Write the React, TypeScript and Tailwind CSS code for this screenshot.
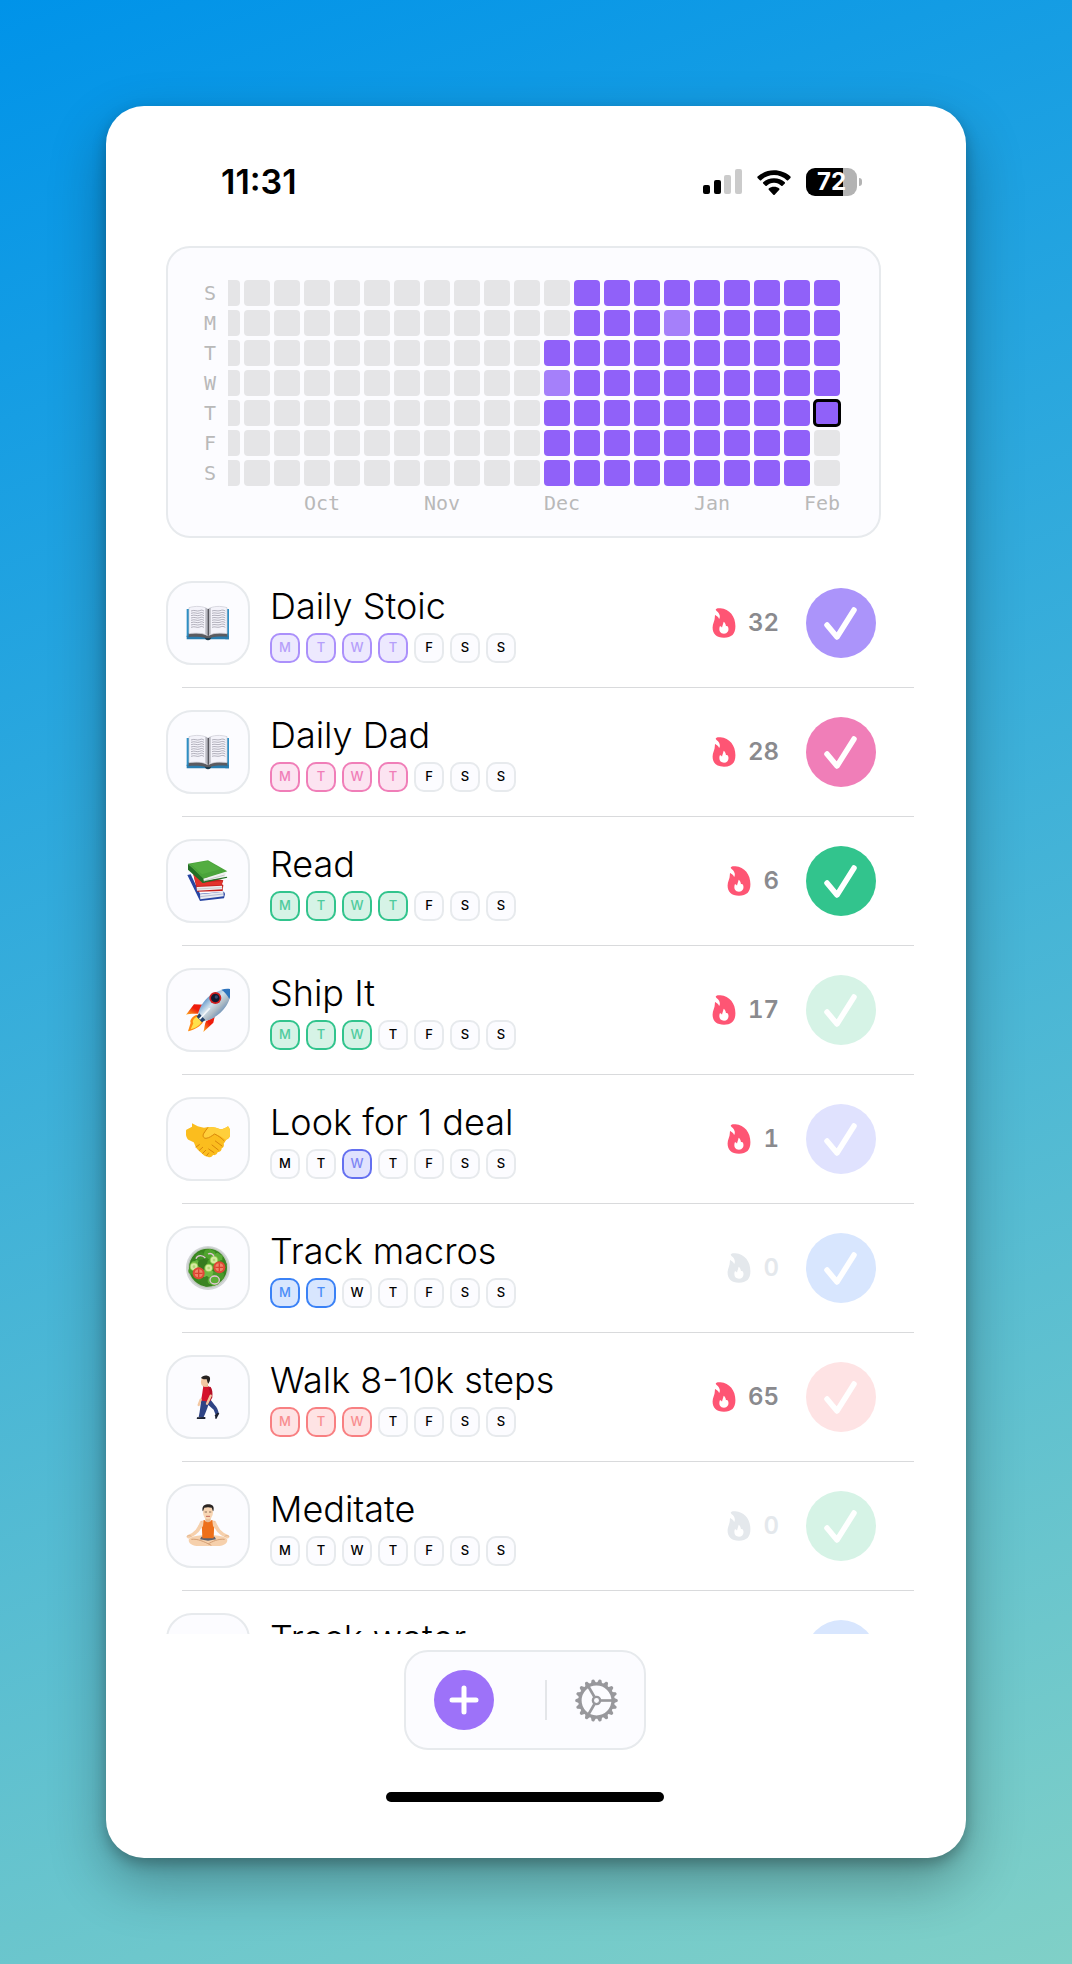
import { useState, type ReactNode } from "react";

type Tone = { chip: string; solid: string; soft: string };

const violet: Tone = {
  chip: "border-[#ab90fb] bg-[#ede9fe] text-[#b59ffa]",
  solid: "bg-[#ab94fa]",
  soft: "bg-[#ede9fe]",
};
const pink: Tone = {
  chip: "border-[#f07eb8] bg-[#fce4f1] text-[#f07eb8]",
  solid: "bg-[#f07eb8]",
  soft: "bg-[#fce4f1]",
};
const green: Tone = {
  chip: "border-[#32c48d] bg-[#d6f3e6] text-[#4fcb9d]",
  solid: "bg-[#32c48d]",
  soft: "bg-[#d6f3e6]",
};
const indigo: Tone = {
  chip: "border-[#6470f0] bg-[#e0e2fe] text-[#7e86f4]",
  solid: "bg-[#6470f0]",
  soft: "bg-[#e0e2fe]",
};
const blue: Tone = {
  chip: "border-[#3b82f6] bg-[#d8e6fe] text-[#4b8df7]",
  solid: "bg-[#3b82f6]",
  soft: "bg-[#d8e6fe]",
};
const red: Tone = {
  chip: "border-[#f88082] bg-[#fee3e4] text-[#f88d8f]",
  solid: "bg-[#f88082]",
  soft: "bg-[#fee3e4]",
};

function Art({ children }: { children?: ReactNode }) {
  return (
    <svg viewBox="0 0 132 132" className="size-11" aria-hidden="true">
      {children}
    </svg>
  );
}

function OpenBook() {
  const lines = [30, 37, 44, 51, 58, 65, 72, 79];
  return (
    <Art>
      <path d="M2 24h12v84H2zM118 24h11v91h-11z" fill="#2f8fc4" />
      <path d="M2 104h127v11H2z" fill="#2a7db0" />
      <path d="M56 106h20c0 8-4 12-10 12s-10-4-10-12z" fill="#1e3a4c" />
      <path d="M8 96h116v11c-20-1-40 0-52 4H60c-14-4-34-4-52-3z" fill="#5b5b60" />
      <path d="M9 20C28 14 52 15 65 24v80C52 96 30 95 9 98z" fill="#f4f3fa" stroke="#c9c8d2" strokeWidth="2" />
      <path d="M123 20C104 14 80 15 67 24v80c13-8 35-9 56-6z" fill="#f4f3fa" stroke="#c9c8d2" strokeWidth="2" />
      <path d="M58 20c5 1 7 3 8 5 1-2 3-4 8-5v78l-8 6-8-6z" fill="#b9b9c1" />
      <path d="M65 24h4v80h-4z" fill="#55555c" />
      {lines.map((y) => (
        <path
          key={y}
          d={`M15 ${y}c12-5 18 3 26-1s8 0 13 1M78 ${y}c8-4 16 2 24-1s10-2 16 1`}
          fill="none"
          stroke="#8f8e9b"
          strokeWidth="2"
        />
      ))}
    </Art>
  );
}

function Books() {
  return (
    <Art>
      <path d="M4 48l10-2 28 58 72-6 3 7-3 13-72 8z" fill="#2745a3" />
      <path d="M42 106l70-8 1 14-70 9z" fill="#e8eaf0" />
      <path d="M42 113l70-8" stroke="#9ba6c8" strokeWidth="2" />
      <path d="M22 46l90 18-4 12 4 2-2 18-76 2z" fill="#c4201d" />
      <path d="M32 84l76-4 1 11-76 4z" fill="#eeeef0" />
      <path d="M32 90l76-4" stroke="#aaa" strokeWidth="1.5" />
      <path d="M22 46l40 24 48-4-4 12-74 3z" fill="#e2332b" />
      <path d="M6 14v18l44 40 8-2-4-14z" fill="#226f24" />
      <path d="M52 58l70-19-6 15-62 15z" fill="#f1f1f1" />
      <path d="M54 65l62-17" stroke="#b5b5b5" strokeWidth="2" />
      <path d="M50 72l74-16-2-3-66 13z" fill="#226f24" />
      <path d="M6 14L66 4l58 33-72 22z" fill="#4aa43a" />
      <path d="M14 15l52-9 40 24-58 16z" fill="#5bb548" opacity=".5" />
    </Art>
  );
}

function Rocket() {
  return (
    <Art>
      <defs>
        <linearGradient id="hull" x1="0" y1="0" x2="1" y2="1">
          <stop offset=".2" stopColor="#3f7fc0" />
          <stop offset=".45" stopColor="#cfe0ec" />
          <stop offset=".6" stopColor="#aebbc4" />
          <stop offset=".85" stopColor="#3c74b2" />
        </linearGradient>
        <linearGradient id="fin" x1="1" y1="0" x2="0" y2="1">
          <stop offset=".45" stopColor="#ee1c0c" />
          <stop offset="1" stopColor="#ffb020" />
        </linearGradient>
      </defs>
      <path d="M54 50l-30-1L0 80c10-4 26-3 36-3z" fill="url(#fin)" />
      <path d="M86 86l-4 18-30 28c4-10 3-22 8-32z" fill="url(#fin)" />
      <path d="M34 80c-16 4-24 18-20 24L6 130c16-4 40-14 46-30z" fill="#ff8a12" />
      <path d="M34 86c-12 4-16 14-12 20l-8 18c14-3 28-12 32-22z" fill="#ffe14a" />
      <path d="M36 80c4-24 22-50 46-64C98 8 118 1 132 3c4 16-1 36-12 52-14 22-42 42-66 44z" fill="url(#hull)" />
      <path d="M106 5c10-3 20-3 26-2 3 10 2 20-2 30-6-12-14-22-24-28z" fill="#2f74bd" />
      <path d="M40 76l18 20-10 7-16-17z" fill="#23426b" />
      <circle cx="88" cy="30" r="18" fill="#d11d1d" />
      <circle cx="88" cy="30" r="13" fill="#111a30" />
      <circle cx="91" cy="27" r="5" fill="#34496f" />
      <path d="M70 62L42 92" stroke="#f3f7fa" strokeWidth="5" strokeLinecap="round" />
    </Art>
  );
}

function Handshake() {
  return (
    <Art>
      <path
        d="M18 29L1 38c-4 10 0 26 6 30l16 8c4 6 4 12 8 17 6 7 12 13 18 17 4 6 12 8 16 9 8 4 14 0 16-5 8 2 12-3 14-8 8-1 12-6 12-12 6-3 8-9 6-14l8-12c8-3 10-8 12-14 2-10-1-20-7-26-8 5-14 8-22 9-10-5-22-8-32-7-8 0-12 2-18 2-14-1-24-6-36-13z"
        fill="#fbbd1e"
      />
      <path d="M64 31c8-2 26-1 40 7 8-1 16-6 22-10 5 6 8 16 7 24-3 10-8 14-14 16-8-6-18-14-34-18-8 6-16 14-24 15-8-1-11-8-8-13z" fill="#ffcf3b" />
      <path d="M54 48c-6 8-2 16 6 16 10-1 18-8 26-13 12 6 20 12 28 20M88 72l20 15M78 84l19 15M68 96l16 11" fill="none" stroke="#d8860b" strokeWidth="3" strokeLinecap="round" />
      <path d="M30 90l10-7M40 100l10-9M50 109l9-9M62 116l6-8" stroke="#d8860b" strokeWidth="3" strokeLinecap="round" />
      <path d="M66 31c-4 6-8 10-12 17" stroke="#d8860b" strokeWidth="3" fill="none" />
    </Art>
  );
}

function Salad() {
  const leaves = [
    [44, 34, "#3f8f24"], [70, 24, "#4fa32d"], [92, 36, "#5cae37"], [104, 58, "#3b8423"],
    [30, 58, "#62b33c"], [52, 54, "#357a1e"], [80, 52, "#4a9a2a"], [40, 88, "#3f8f24"],
    [66, 84, "#6dba44"], [96, 88, "#4a9a2a"], [60, 106, "#3b8423"], [82, 104, "#5cae37"], [24, 74, "#4a9a2a"],
  ] as const;
  return (
    <Art>
      <circle cx="66" cy="66" r="66" fill="#d3d6d8" />
      <circle cx="66" cy="65" r="61" fill="#bfc9bd" />
      <circle cx="66" cy="65" r="57" fill="#38851f" />
      {leaves.map(([x, y, fill]) => (
        <path
          key={`${x}-${y}`}
          d={`M${x - 17} ${y}q3-15 14-13q6-7 12 2q12 3 8 12q2 12-9 12q-9 7-15-2q-10-1-10-11z`}
          fill={fill}
        />
      ))}
      {[[24, 62], [68, 66], [84, 42]].map(([x, y]) => (
        <g key={x}>
          <circle cx={x} cy={y} r="13" fill="#8cc84c" />
          <circle cx={x} cy={y} r="10" fill="#d5eba0" />
          <circle cx={x} cy={y} r="4" fill="#b2d777" />
        </g>
      ))}
      {[[38, 82], [100, 64]].map(([x, y]) => (
        <g key={x}>
          <circle cx={x} cy={y} r="18" fill="#df4736" />
          <circle cx={x} cy={y} r="12" fill="#f08468" />
          <path d={`M${x - 12} ${y}h24M${x} ${y - 12}v24`} stroke="#d9402f" strokeWidth="4" />
        </g>
      ))}
      <ellipse cx="86" cy="102" rx="14" ry="12" fill="none" stroke="#e5c3d6" strokeWidth="4" />
      <path d="M30 38c4-12 20-12 28-2M66 24c8-4 16 0 18 8" fill="none" stroke="#e5c3d6" strokeWidth="4" />
    </Art>
  );
}

function Walker() {
  return (
    <Art>
      <path d="M46 72c-2 16-4 36-8 54l14 2c7-14 12-28 15-38l16 14 7 18 9-5c-3-12-6-20-13-27L72 72z" fill="#2f4485" />
      <path d="M33 127l25-1v7l-26 1zM86 121l9-8 5 2-9 17c-4 0-4-2-3-6z" fill="#1c2130" />
      <path d="M52 34c-2 10-3 26-7 42 8 4 20 4 30 0 2-14 4-26 0-38-4-4-14-6-23-4z" fill="#d4122b" />
      <path d="M70 38c6 6 6 16 5 28L62 86" fill="none" stroke="#b50e25" strokeWidth="8" />
      <path d="M74 62L63 86M44 74l-6 16" stroke="#f3c8a3" strokeWidth="7" strokeLinecap="round" />
      <path d="M52 20h14v16H54z" fill="#e8b68e" />
      <path d="M47 10c-1 6-3 10-2 14 1 8 6 10 12 9 8-1 12-8 11-18z" fill="#f3c8a3" />
      <path d="M45 9c4-9 20-10 26-3 3 7 0 14-4 20-3-2-3-8-5-13-6 0-12 0-17-4z" fill="#26211f" />
    </Art>
  );
}

function Yogi() {
  return (
    <Art>
      <path d="M8 108c2-10 20-12 40-14h36c20 2 38 4 40 14 0 12-14 18-30 18H38c-16 0-30-6-30-18z" fill="#f6d0ac" />
      <path d="M46 98h40l4 8-24 4-24-4z" fill="#5b6270" />
      <path d="M16 106c20-2 36 6 60 18M116 106c-20-2-36 6-50 14" fill="none" stroke="#d49f74" strokeWidth="3" />
      <path d="M47 56C38 76 34 86 8 98M85 56c9 20 13 30 39 42" fill="none" stroke="#f6d0ac" strokeWidth="11" strokeLinecap="round" strokeLinejoin="round" />
      <path d="M2 98c4-4 8-4 14-1M130 98c-4-4-8-4-14-1" fill="none" stroke="#d9a67b" strokeWidth="2" />
      <path d="M58 38h16v18H58z" fill="#e9bd95" />
      <path d="M47 52l9-4c3 9 17 9 20 0l9 4-2 51H49z" fill="#ed701b" />
      <path d="M46 52l7-2-2 16-7 10M86 52l-7-2 2 16 7 10" fill="#f6d0ac" />
      <ellipse cx="66" cy="25" rx="15" ry="21" fill="#f8d6b4" />
      <path d="M50 22C46 4 58 1 67 1s20 4 15 21c-3-2-3-8-5-11-8-2-14-2-22 0-2 3-2 9-5 11z" fill="#2b2523" />
      <path d="M56 24h7M69 24h7" stroke="#5b3d2c" strokeWidth="2" />
      <path d="M61 37h10" stroke="#c4665a" strokeWidth="3" strokeLinecap="round" />
    </Art>
  );
}

type Habit = {
  name: string;
  art: ReactNode;
  days: number[];
  streak: number;
  done: boolean;
  tone: Tone;
};

const habits: Habit[] = [
  { name: "Daily Stoic", art: <OpenBook />, days: [0, 1, 2, 3], streak: 32, done: true, tone: violet },
  { name: "Daily Dad", art: <OpenBook />, days: [0, 1, 2, 3], streak: 28, done: true, tone: pink },
  { name: "Read", art: <Books />, days: [0, 1, 2, 3], streak: 6, done: true, tone: green },
  { name: "Ship It", art: <Rocket />, days: [0, 1, 2], streak: 17, done: false, tone: green },
  { name: "Look for 1 deal", art: <Handshake />, days: [2], streak: 1, done: false, tone: indigo },
  { name: "Track macros", art: <Salad />, days: [0, 1], streak: 0, done: false, tone: blue },
  { name: "Walk 8-10k steps", art: <Walker />, days: [0, 1, 2], streak: 65, done: false, tone: red },
  { name: "Meditate", art: <Yogi />, days: [], streak: 0, done: false, tone: green },
  { name: "Track water", art: null, days: [], streak: 0, done: false, tone: blue },
];

function Flame({ lit }: { lit: boolean }) {
  return (
    <svg viewBox="0 0 70 92" className={lit ? "h-[30px] w-6 text-[#fe5574]" : "h-[30px] w-6 text-[#e4e8ec]"} aria-hidden="true">
      <path
        fill="currentColor"
        fillRule="evenodd"
        d="M10 4C12 1 18 1 24 1C52 3 70 26 70 56C70 80 58 91 35 91C12 91 0 80 0 60C0 48 7 40 7 27C7 23 8 19 11 24C15 25 18 29 20 34C25 27 21 17 16 12C12 9 9 7 10 4ZM34 42C32 50 30 54 29 60C27 58 25 54 22 57C18 70 24 79 35 79C45 79 51 70 48 60C46 55 43 55 41 56C41 50 38 45 34 42Z"
      />
    </svg>
  );
}

function HabitRow({ habit }: { habit: Habit }) {
  const [done, setDone] = useState(habit.done);
  return (
    <li className="relative flex h-[129px] items-center pr-[38px] pb-px after:absolute after:right-0 after:bottom-0 after:left-4 after:h-px after:bg-[#d9dadc]">
      <div className="grid size-[84px] shrink-0 place-items-center rounded-[26px] border-2 border-[#e7eaed] bg-[#fcfcff]">
        {habit.art}
      </div>
      <div className="ml-5 flex min-w-0 flex-1 flex-col gap-1">
        <h2 className="truncate text-4xl leading-[46px] font-light">{habit.name}</h2>
        <ol className="flex gap-1.5" aria-label={`${habit.name} this week`}>
          {["M", "T", "W", "T", "F", "S", "S"].map((day, i) => (
            <li
              key={i}
              className={`grid size-[30px] place-items-center rounded-[10px] border-2 text-[13px] font-medium ${
                habit.days.includes(i) ? habit.tone.chip : "border-[#e7eaed] bg-[#fcfcff] text-black"
              }`}
            >
              {day}
            </li>
          ))}
        </ol>
      </div>
      <div className="flex items-center gap-3">
        <Flame lit={habit.streak > 0} />
        <span
          className={`text-2xl font-semibold tabular-nums ${habit.streak > 0 ? "text-[#8a8a8e]" : "text-[#e4e8ec]"}`}
        >
          {habit.streak}
        </span>
      </div>
      <label className="ml-[27px] grid cursor-pointer place-items-center">
        <input
          type="checkbox"
          aria-label={`Complete ${habit.name}`}
          checked={done}
          onChange={() => setDone(!done)}
          className={`col-start-1 row-start-1 size-[70px] appearance-none rounded-full ${done ? habit.tone.solid : habit.tone.soft}`}
        />
        <svg viewBox="0 0 70 70" className="pointer-events-none col-start-1 row-start-1 size-[70px]" fill="none" aria-hidden="true">
          <path d="M21 37L31 49L48 22" stroke="white" strokeWidth="5.5" strokeLinecap="round" strokeLinejoin="round" />
        </svg>
      </label>
    </li>
  );
}

const weeks = Array.from({ length: 21 }, (_, week) =>
  Array.from({ length: 7 }, (_, day) => {
    if (week < 11 || (week === 11 && day < 2)) return "none";
    if (week === 20 && day > 4) return "none";
    if ((week === 11 && day === 3) || (week === 15 && day === 1)) return "some";
    if (week === 20 && day === 4) return "today";
    return "all";
  }),
);

const cellStyle: Record<string, string> = {
  none: "bg-[#e5e5e7]",
  some: "bg-[#a580fa]",
  all: "bg-[#9061f9]",
  today: "bg-[#9061f9] outline-3 -outline-offset-2 outline-black",
};

function Heatmap() {
  return (
    <section
      aria-label="Activity"
      className="mr-[85px] ml-[60px] flex gap-3 rounded-[24px] border-2 border-[#e7eaed] bg-[#fcfcff] pt-[30px] pr-[37px] pb-[18px] pl-9 font-['DejaVu_Sans_Mono',monospace] text-xl leading-[30px] text-[#b9b9b9]"
    >
      <div>
        {["S", "M", "T", "W", "T", "F", "S"].map((d, i) => (
          <div key={i}>{d}</div>
        ))}
      </div>
      <div className="min-w-0 flex-1 overflow-hidden pt-0.5 pr-0.5">
        <div className="flex justify-end gap-1">
          {weeks.map((week, w) => (
            <div key={w} className="flex shrink-0 flex-col gap-1">
              {week.map((state, d) => (
                <div key={d} className={`size-[26px] rounded-[4px] ${cellStyle[state]}`} />
              ))}
            </div>
          ))}
        </div>
        <div className="mt-0.5 grid grid-cols-[repeat(20,26px)] justify-end gap-1 whitespace-nowrap">
          <span className="col-start-3 col-end-5">Oct</span>
          <span className="col-start-7 col-end-9">Nov</span>
          <span className="col-start-11 col-end-13">Dec</span>
          <span className="col-start-16 col-end-18">Jan</span>
          <span className="col-start-19 col-end-21 justify-self-end">Feb</span>
        </div>
      </div>
    </section>
  );
}

function StatusBar() {
  return (
    <header className="flex h-[140px] items-center justify-between pt-3 pr-[104px] pl-[115px]">
      <time className="text-[34px] leading-10 font-semibold">11:31</time>
      <div className="flex items-center gap-[15px]">
        <svg viewBox="0 0 39 26" className="h-[26px] w-[39px]" aria-label="Signal">
          <rect x="0" y="16" width="7" height="9" rx="2" />
          <rect x="11" y="11" width="7" height="14" rx="2" />
          <rect x="21" y="6" width="7" height="19" rx="2" fill="#cbcbcb" />
          <rect x="32" y="0" width="7" height="25" rx="2" fill="#cbcbcb" />
        </svg>
        <svg viewBox="0 0 102 76" className="h-[25px] w-[34px]" aria-label="Wi-Fi">
          <path d="M51 1C32 1 14 8 1 20c-1 1-1 3 0 4l7 7c1 1 3 1 4 0 10-10 24-16 39-16s29 6 39 16c1 1 3 1 4 0l7-7c1-1 1-3 0-4C88 8 70 1 51 1z" />
          <path d="M51 25c-13 0-24 5-33 12-1 1-1 3 0 4l7 7c1 1 3 1 4 0 6-5 13-9 22-9s16 4 22 9c1 1 3 1 4 0l7-7c1-1 1-3 0-4-9-7-20-12-33-12z" />
          <path d="M51 51c-6 0-12 2-16 5-1 1-1 3 0 4l14 15c1 1 3 1 4 0l14-15c1-1 1-3 0-4-4-3-10-5-16-5z" />
        </svg>
        <div className="flex items-center gap-0.5">
          <div className="grid h-7 w-[51px] place-items-center rounded-[9px] bg-linear-to-r from-black from-72% to-[#b3b3b3] to-72% text-2xl leading-7 font-bold text-white">
            72
          </div>
          <div className="h-2 w-[3px] rounded-r-full bg-[#b3b3b3]" />
        </div>
      </div>
    </header>
  );
}

function Gear() {
  const teeth = Array.from({ length: 18 }, (_, i) => i * 20);
  return (
    <svg viewBox="-65 -65 130 130" className="size-[43px] text-[#98989c]" fill="none" stroke="currentColor" aria-hidden="true">
      <circle r="50" strokeWidth="10" />
      <circle r="11" strokeWidth="7" />
      {teeth.map((a) => (
        <path key={a} d="M50 -9L63 -4Q66 0 63 4L50 9Z" transform={`rotate(${a})`} fill="currentColor" stroke="none" />
      ))}
      {[0, 120, 240].map((a) => (
        <path key={a} d="M13 0H48" strokeWidth="8" transform={`rotate(${a})`} />
      ))}
    </svg>
  );
}

export default function App() {
  return (
    <div className="flex h-screen flex-col bg-[linear-gradient(160deg,#0093e9_0%,#80d0c7_100%)] p-[106px] font-[Inter,sans-serif] text-black">
      <main className="flex min-h-0 flex-1 flex-col overflow-hidden rounded-[38px] bg-white shadow-[0_24px_56px_rgba(0,0,0,0.3),0_6px_14px_rgba(0,0,0,0.25)]">
        <StatusBar />
        <Heatmap />
        <ul className="mt-[21px] mr-[52px] ml-[60px] min-h-0 flex-1 overflow-hidden">
          {habits.map((habit) => (
            <HabitRow key={habit.name} habit={habit} />
          ))}
        </ul>
        <footer className="flex flex-col items-center pt-4 pr-[84px] pb-14 pl-[61px]">
          <nav className="flex h-[100px] items-center rounded-[24px] border-2 border-[#e7eaed] bg-[#fcfcff] pr-[26px] pl-7">
            <button type="button" aria-label="Add habit" className="grid size-[60px] place-items-center rounded-full bg-[#9d72f9]">
              <svg viewBox="0 0 30 30" className="size-[30px]" stroke="white" strokeWidth="5" strokeLinecap="round" aria-hidden="true">
                <path d="M15 3v24M3 15h24" />
              </svg>
            </button>
            <div className="mr-7 ml-[51px] h-10 w-0.5 bg-[#e4e6e9]" />
            <button type="button" aria-label="Settings" className="grid place-items-center">
              <Gear />
            </button>
          </nav>
          <div className="mt-[42px] h-2.5 w-[278px] rounded-full bg-black" />
        </footer>
      </main>
    </div>
  );
}
